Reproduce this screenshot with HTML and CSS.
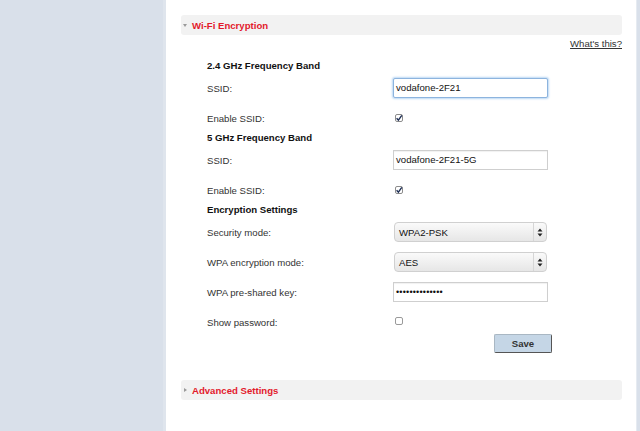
FILE: index.html
```html
<!DOCTYPE html>
<html>
<head>
<meta charset="utf-8">
<link rel="stylesheet" href="styles.css">
</head>
<body>
<div class="page">
  <aside class="sidebar"></aside>
  <main class="content">
    <div class="band">
      <span class="tri-down"></span>
      <span class="band-title">Wi-Fi Encryption</span>
    </div>
    <div class="help"><a class="help-link">What's this?</a></div>
    <div class="form">
      <div class="heading">2.4 GHz Frequency Band</div>
      <div class="row">
        <span class="label">SSID:</span>
        <div class="field focused">vodafone-2F21</div>
      </div>
      <div class="row">
        <span class="label">Enable SSID:</span>
        <span class="check"><svg viewBox="0 0 8 8" width="8" height="8"><path d="M1.6 4.2 L3.4 6.2 L6.8 1.4" fill="none" stroke="#1f2f55" stroke-width="1.4"/></svg></span>
      </div>
      <div class="heading">5 GHz Frequency Band</div>
      <div class="row">
        <span class="label">SSID:</span>
        <div class="field">vodafone-2F21-5G</div>
      </div>
      <div class="row">
        <span class="label">Enable SSID:</span>
        <span class="check"><svg viewBox="0 0 8 8" width="8" height="8"><path d="M1.6 4.2 L3.4 6.2 L6.8 1.4" fill="none" stroke="#1f2f55" stroke-width="1.4"/></svg></span>
      </div>
      <div class="heading">Encryption Settings</div>
      <div class="row">
        <span class="label">Security mode:</span>
        <div class="select"><span class="select-text">WPA2-PSK</span><span class="arrows"><svg viewBox="0 0 6 9" width="6" height="9"><path d="M3 0.5 L5.5 3.5 L0.5 3.5 Z M3 8.5 L5.5 5.5 L0.5 5.5 Z" fill="#222"/></svg></span></div>
      </div>
      <div class="row">
        <span class="label">WPA encryption mode:</span>
        <div class="select"><span class="select-text">AES</span><span class="arrows"><svg viewBox="0 0 6 9" width="6" height="9"><path d="M3 0.5 L5.5 3.5 L0.5 3.5 Z M3 8.5 L5.5 5.5 L0.5 5.5 Z" fill="#222"/></svg></span></div>
      </div>
      <div class="row">
        <span class="label">WPA pre-shared key:</span>
        <div class="field dots">••••••••••••••</div>
      </div>
      <div class="row">
        <span class="label">Show password:</span>
        <span class="check unchecked"></span>
      </div>
      <div class="row save-row">
        <span class="label"></span>
        <button class="save">Save</button>
      </div>
    </div>
    <div class="band advanced">
      <span class="tri-right"></span>
      <span class="band-title">Advanced Settings</span>
    </div>
  </main>
  <div class="edge"></div>
</div>
</body>
</html>
```
FILE: styles.css
```css
html, body {
  margin: 0;
  padding: 0;
  height: 100%;
}
body {
  font-family: "Liberation Sans", Arial, sans-serif;
  font-size: 9.6px;
  color: #333;
  background: #fff;
}
.page {
  display: flex;
  height: 431px;
  overflow: hidden;
}
.sidebar {
  width: 163px;
  flex: none;
  background: #d9e0ea;
  border-right: 3px solid #dfe5ed;
}
.content {
  width: 441px;
  flex: none;
  background: #fff;
  padding: 0 14px 0 15px;
}
.edge {
  flex: 1;
  background: #d9e0ea;
  border-left: 1px solid #e6ebf1;
}
.band {
  margin-top: 15px;
  height: 20px;
  background: #f2f2f2;
  border-radius: 3px;
  display: flex;
  align-items: center;
  padding-left: 2px;
}
.band-title {
  color: #e3192b;
  font-weight: bold;
  font-size: 9.6px;
}
.tri-down {
  width: 0;
  height: 0;
  border-left: 2.5px solid transparent;
  border-right: 2.5px solid transparent;
  border-top: 3px solid #9a9a9a;
  margin: 1px 5px 0 0;
}
.tri-right {
  width: 0;
  height: 0;
  border-top: 2.5px solid transparent;
  border-bottom: 2.5px solid transparent;
  border-left: 3px solid #9a9a9a;
  margin: 0 5px 0 1px;
}
.help {
  margin-top: 2px;
  height: 14px;
  line-height: 14px;
  text-align: right;
}
.help-link {
  color: #333;
  text-decoration: underline;
}
.form {
  padding-top: 10px;
  padding-left: 26px;
}
.heading {
  height: 10px;
  line-height: 10px;
  margin-bottom: 2px;
  font-weight: bold;
  color: #111;
}
.row {
  height: 30px;
  display: flex;
  align-items: center;
}
.label {
  width: 186px;
  flex: none;
  color: #333;
}
.field {
  box-sizing: border-box;
  width: 155px;
  height: 20px;
  border: 1px solid #cfcfcf;
  box-shadow: inset 0 1px 1px rgba(0,0,0,0.06);
  padding-left: 2px;
  line-height: 18px;
  color: #111;
  background: #fff;
}
.field.focused {
  border-color: #8db4de;
  box-shadow: 0 0 2px 1px #bcd8f4;
  border-radius: 2px;
}
.field.dots {
  font-size: 9px;
  letter-spacing: 0.2px;
}
.check {
  box-sizing: border-box;
  width: 8px;
  height: 8px;
  margin-left: 2px;
  border: 1px solid #8c8c8c;
  border-radius: 2px;
  background: #fff;
  display: flex;
  align-items: center;
  justify-content: center;
  overflow: visible;
}
.check svg {
  flex: none;
  overflow: visible;
}
.check.unchecked {
  border-color: #9a9a9a;
  margin-top: -3px;
}
.select {
  box-sizing: border-box;
  width: 153px;
  height: 20px;
  margin-left: 1px;
  border: 1px solid #d0d0d0;
  border-radius: 4px;
  background: linear-gradient(#fafafa, #e6e6e6);
  display: flex;
  align-items: center;
  color: #111;
}
.select-text {
  flex: 1;
  padding-left: 4px;
}
.arrows {
  width: 12px;
  height: 18px;
  border-left: 1px solid #d6d6d6;
  display: flex;
  align-items: center;
  justify-content: center;
}
.save-row {
  height: 18px;
  margin-top: -3px;
}
.save {
  margin-left: 101px;
  width: 58px;
  height: 19px;
  padding: 0;
  border: 1px solid #a9b7c3;
  border-right-color: #555;
  border-bottom-color: #555;
  border-radius: 2px;
  background: #c5d6e6;
  font-family: "Liberation Sans", Arial, sans-serif;
  font-size: 9.6px;
  font-weight: bold;
  color: #333;
}
.advanced {
  margin-top: 28px;
}
```
